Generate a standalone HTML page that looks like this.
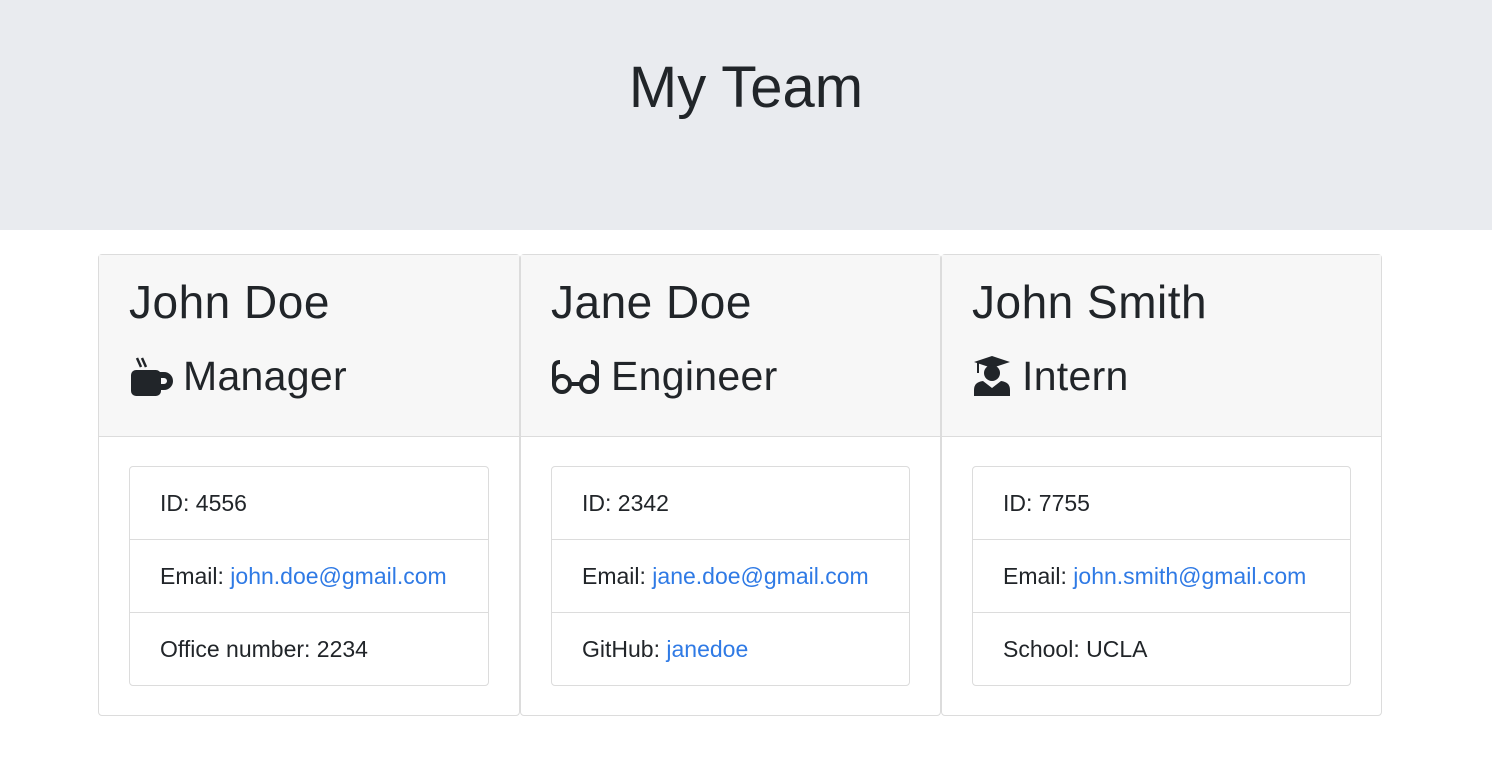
<!DOCTYPE html>
<html><head><style>
body{margin:0;font-family:"Liberation Sans",sans-serif;color:#212529;background:#fff;}
.jumbo{height:230px;background:#e9ebef;text-align:center;}
.jumbo h1{margin:0;padding-top:52px;font-size:58px;font-weight:500;line-height:72px;}
.card{position:absolute;top:254px;height:460px;border:1px solid #dcdcdc;border-radius:4px;background:#fff;}
.hd{height:181px;background:#f7f7f7;border-bottom:1px solid #dcdcdc;padding-left:30px;}
.hd .n{font-size:46px;line-height:46px;padding-top:24px;font-weight:500;letter-spacing:0.5px}
.hd .r{font-size:41px;line-height:40px;margin-top:29px;display:flex;align-items:center;font-weight:500;letter-spacing:0.3px}
.hd .r svg{margin-right:10px}
.lg{position:absolute;left:30px;right:30px;top:211px;border:1px solid #dcdcdc;border-radius:4px;}
.lg div{height:72px;line-height:72px;padding-left:30px;font-size:23px;border-top:1px solid #dcdcdc}
.lg div:first-child{border-top:none}
a{color:#2f7ae5;text-decoration:none}
</style></head><body>
<div class="jumbo"><h1>My Team</h1></div>
<div class="card" style="left:98px;width:420px">
<div class="hd"><div class="n">John Doe</div><div class="r"><svg width="44" height="44" viewBox="0 0 44 44"><path d="M8 4l4 9M13 4l4 9" stroke="#212529" stroke-width="2.5"/><rect x="2" y="16" width="30" height="26" rx="5" fill="#212529"/><path d="M30 21h5a6 6 0 0 1 0 12h-5" stroke="#212529" stroke-width="6" fill="none"/></svg>Manager</div></div>
<div class="lg"><div>ID: 4556</div><div>Email: <a>john.doe@gmail.com</a></div><div>Office number: 2234</div></div></div>
<div class="card" style="left:520px;width:419px">
<div class="hd"><div class="n">Jane Doe</div><div class="r"><svg width="50" height="44" viewBox="0 0 50 44"><circle cx="11" cy="30" r="8" stroke="#212529" stroke-width="4" fill="none"/><circle cx="38" cy="30" r="8" stroke="#212529" stroke-width="4" fill="none"/><path d="M19 30h11M3 30V14q0-6 6-6M46 30V14q0-6-6-6" stroke="#212529" stroke-width="4" fill="none"/></svg>Engineer</div></div>
<div class="lg"><div>ID: 2342</div><div>Email: <a>jane.doe@gmail.com</a></div><div>GitHub: <a>janedoe</a></div></div></div>
<div class="card" style="left:941px;width:439px">
<div class="hd"><div class="n">John Smith</div><div class="r"><svg width="40" height="44" viewBox="0 0 40 44"><path d="M20 2L38 8 20 14 2 8z" fill="#212529"/><path d="M6 9v10" stroke="#212529" stroke-width="2"/><circle cx="20" cy="19" r="8" fill="#212529"/><path d="M2 42v-6q0-8 9-9l9 7 9-7q9 1 9 9v6z" fill="#212529"/></svg>Intern</div></div>
<div class="lg"><div>ID: 7755</div><div>Email: <a>john.smith@gmail.com</a></div><div>School: UCLA</div></div></div>
</body></html>
